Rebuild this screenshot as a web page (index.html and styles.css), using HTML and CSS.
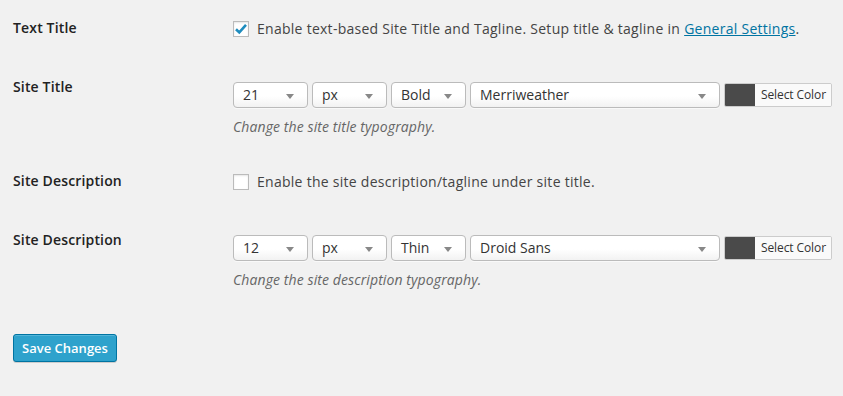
FILE: index.html
```html
<!DOCTYPE html>
<html>
<head>
<meta charset="utf-8">
<link rel="stylesheet" href="styles.css">
</head>
<body>
<div class="form">
  <div class="row row-check">
    <div class="label">Text Title</div>
    <div class="field">
      <label class="check"><span class="box checked"><svg width="14" height="12" viewBox="0 0 14 12"><path d="M2 6.2 L5.3 9.4 L12 1.8" fill="none" stroke="#1e8cbe" stroke-width="2.6"/></svg></span>Enable text-based Site Title and Tagline. Setup title &amp; tagline in <a href="#">General Settings</a>.</label>
    </div>
  </div>
  <div class="row row-typo">
    <div class="label">Site Title</div>
    <div class="field">
      <div class="controls">
        <div class="select w-size">21<span class="arrow"></span></div>
        <div class="select w-unit">px<span class="arrow"></span></div>
        <div class="select w-weight">Bold<span class="arrow"></span></div>
        <div class="select w-family">Merriweather<span class="arrow"></span></div>
        <div class="color"><span class="swatch"></span><span class="color-label">Select Color</span></div>
      </div>
      <p class="desc">Change the site title typography.</p>
    </div>
  </div>
  <div class="row row-check">
    <div class="label">Site Description</div>
    <div class="field">
      <label class="check"><span class="box"></span>Enable the site description/tagline under site title.</label>
    </div>
  </div>
  <div class="row row-typo">
    <div class="label">Site Description</div>
    <div class="field">
      <div class="controls">
        <div class="select w-size">12<span class="arrow"></span></div>
        <div class="select w-unit">px<span class="arrow"></span></div>
        <div class="select w-weight">Thin<span class="arrow"></span></div>
        <div class="select w-family">Droid Sans<span class="arrow"></span></div>
        <div class="color"><span class="swatch"></span><span class="color-label">Select Color</span></div>
      </div>
      <p class="desc">Change the site description typography.</p>
    </div>
  </div>
  <div class="submit">
    <button class="button-primary">Save Changes</button>
  </div>
</div>
</body>
</html>
```
FILE: styles.css
```css
html, body {
  margin: 0;
  padding: 0;
  background: #f1f1f1;
}
body {
  font-family: "Open Sans", "Liberation Sans", sans-serif;
  font-size: 14px;
  color: #444;
  width: 843px;
  height: 396px;
  overflow: hidden;
}
.form {
  padding-left: 13px;
}
.row {
  display: flex;
  align-items: flex-start;
  padding-top: 18px;
}
.row-check {
  padding-bottom: 20px;
}
.row-typo {
  padding-bottom: 16px;
}
.label {
  width: 220px;
  flex: none;
  font-weight: 600;
  color: #222;
  line-height: 20px;
  letter-spacing: 0.15px;
}
.field {
  flex: 1;
}
.row-check .field {
  padding-top: 1px;
}
.row-typo .field {
  padding-top: 5px;
}
.check {
  display: flex;
  align-items: center;
  line-height: 20px;
  color: #444;
  letter-spacing: 0.27px;
}
.box {
  width: 16px;
  height: 16px;
  box-sizing: border-box;
  border: 1px solid #bbb;
  background: #fff;
  box-shadow: inset 0 1px 2px rgba(0,0,0,0.1);
  margin-right: 8px;
  display: flex;
  align-items: center;
  justify-content: center;
  flex: none;
}
.check a {
  color: #0074a2;
  text-decoration: underline;
  margin-left: 4px;
}
.controls {
  display: flex;
  align-items: flex-start;
  gap: 4px;
}
.select {
  position: relative;
  box-sizing: border-box;
  height: 26px;
  line-height: 24px;
  border: 1px solid #bbb;
  border-radius: 4px;
  background: linear-gradient(#fff, #fff 55%, #f2f2f2);
  box-shadow: 0 1px 0 rgba(255,255,255,0.6);
  padding-left: 9px;
  color: #333;
  font-size: 14px;
}
.w-size { width: 75px; }
.w-unit { width: 75px; }
.w-weight { width: 75px; }
.w-family { width: 250px; }
.arrow {
  position: absolute;
  right: 13px;
  top: 11px;
  width: 0;
  height: 0;
  border-left: 4px solid transparent;
  border-right: 4px solid transparent;
  border-top: 5px solid #888;
}
.color {
  display: flex;
  height: 24px;
  box-sizing: border-box;
  border: 1px solid #ccc;
  border-radius: 2px;
  background: #f7f7f7;
  margin-top: 1px;
  overflow: hidden;
}
.swatch {
  width: 30px;
  background: #4a4a4a;
}
.color-label {
  font-size: 12px;
  line-height: 22px;
  padding: 0 5px 0 6px;
  color: #333;
  background: #fafafa;
  letter-spacing: -0.1px;
}
.desc {
  margin: 9px 0 0;
  font-style: italic;
  font-size: 14px;
  line-height: 20px;
  color: #666;
  letter-spacing: 0.1px;
}
.submit {
  padding-top: 28px;
}
.button-primary {
  font-family: "Open Sans", "Liberation Sans", sans-serif;
  height: 28px;
  width: 104px;
  padding: 0;
  border: 1px solid #0074a2;
  border-radius: 3px;
  background: #2ea2cc;
  color: #fff;
  font-size: 13px;
  font-weight: 600;
  line-height: 26px;
  box-shadow: inset 0 1px 0 rgba(120,200,230,0.5), 0 1px 0 rgba(0,0,0,0.15);
}
```
